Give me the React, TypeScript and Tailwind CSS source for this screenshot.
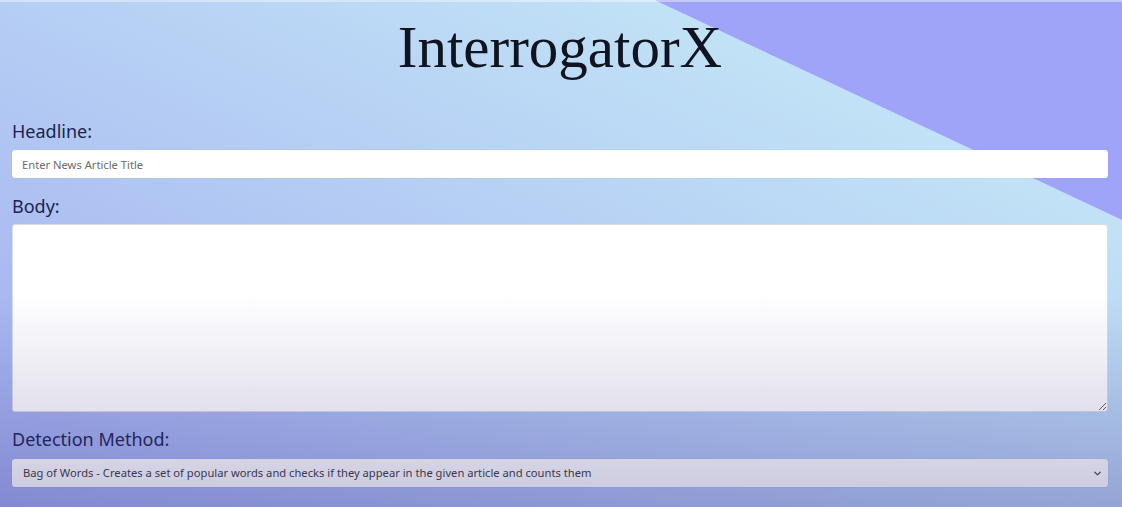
import { ChevronDown } from 'lucide-react'

const methods = [
    'Bag of Words - Creates a set of popular words and checks if they appear in the given article and counts them',
]

export default function App() {
    return (
        <div className="relative min-h-[507px] w-full overflow-hidden bg-[linear-gradient(25.2deg,#a0aaef_0%,#b2c8f3_40%,#c1e2f6_78.7%,#a0a4f8_78.8%,#a0a4f8_100%)] font-['Noto_Sans',sans-serif]">
            <div className="border-t-2 border-white/40 pl-3 pr-[14px]">
                <h1 className="mt-4 text-center font-['Liberation_Serif',serif] text-[59px] leading-none text-[#0f1420]">
                    InterrogatorX
                </h1>

                <label className="mt-[42px] block text-[18px] leading-6 text-[#1b2450]">Headline:</label>
                <input
                    type="text"
                    placeholder="Enter News Article Title"
                    className="mt-[7px] block h-[28px] w-full rounded-[3px] bg-white px-[10px] text-[11.2px] text-[#333] shadow-[0_0_1px_rgba(0,0,0,0.2)] outline-none placeholder:text-[#6b6b6b]"
                />

                <label className="mt-4 block text-[18px] leading-6 text-[#1b2450]">Body:</label>
                <textarea className="mt-[6px] block h-[188px] w-full rounded-[3px] border border-[#d8dce8] bg-white px-[10px] py-1 text-[11px] outline-none" />

                <label className="mt-[15px] block text-[18px] leading-6 text-[#1b2450]">Detection Method:</label>
                <div className="relative mt-2">
                    <select className="block h-[28px] w-full appearance-none rounded-[3px] bg-white pl-[11px] text-[11.2px] text-[#3a3a3a] shadow-[0_0_1px_rgba(0,0,0,0.2)] outline-none">
                        {methods.map((m, i) => (
                            <option key={i}>{m}</option>
                        ))}
                    </select>
                    <ChevronDown
                        size={11}
                        strokeWidth={3}
                        className="pointer-events-none absolute right-[5px] top-[9px] text-[#4a4a4a]"
                    />
                </div>
            </div>

            {/* dim toward the bottom, like the reference capture */}
            <div className="pointer-events-none absolute inset-0 bg-[linear-gradient(to_bottom,transparent_58%,rgba(55,50,130,0.27)_100%)]" />
        </div>
    )
}
